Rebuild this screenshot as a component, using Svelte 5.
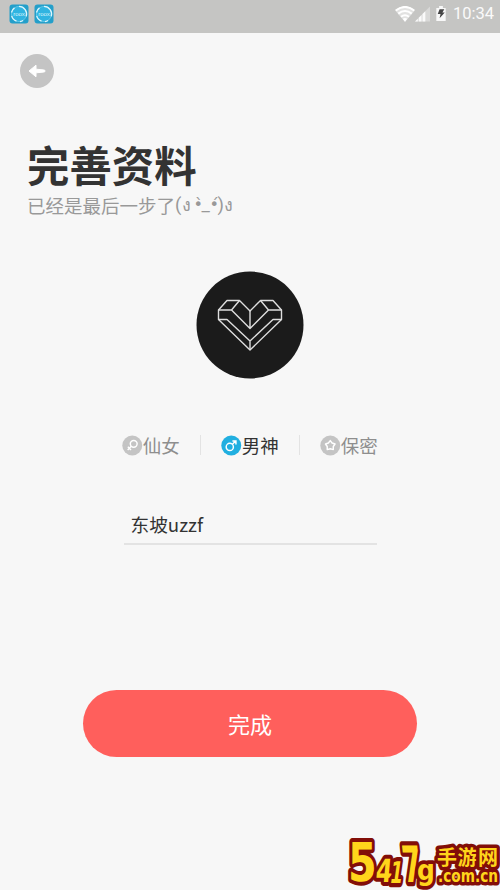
<script lang="ts">
	let gender = $state('male');
	let nickname = $state('东坡uzzf');

	const genders = [
		{ id: 'female', label: '仙女' },
		{ id: 'male', label: '男神' },
		{ id: 'secret', label: '保密' }
	];
</script>

<div class="screen">
	<header class="status">
		<div class="apps">
			{#each [0, 1] as app (app)}
				<svg class="app" viewBox="0 0 20 20">
					<rect x="0.5" y="0.5" width="19" height="19" rx="3" fill="#249fca" />
					<circle cx="10" cy="10" r="7.6" fill="#30b4e1" stroke="#6ccbea" stroke-width="0.8" />
					<path
						d="M10 2.4a7.6 7.6 0 0 1 7.2 10M14 16.5a7.6 7.6 0 0 1-3 1.1M7.5 17.2a7.6 7.6 0 0 1-4.8-5.3M2.5 8.5a7.6 7.6 0 0 1 3-4.6"
						fill="none"
						stroke="#dff6fc"
						stroke-width="1.3"
					/>
					<text x="10" y="12" text-anchor="middle">roox</text>
				</svg>
			{/each}
		</div>
		<div class="system">
			<svg class="wifi" viewBox="0 0 20 16">
				<path d="M0 4.2Q10-3.6 20 4.2L10 16Z" fill="#e2e2e1" />
				<path
					d="M.8 4.5Q10-2.6 19.2 4.5M3.3 7.6Q10 2.4 16.7 7.6M6 10.8Q10 7.8 14 10.8"
					fill="none"
					stroke="#fff"
					stroke-width="2"
				/>
				<path d="M7.7 12.8Q10 11.1 12.3 12.8L10 15.8Z" fill="#fff" />
			</svg>
			<svg class="signal" viewBox="0 0 16 16">
				<path d="M0 16L16 0V16Z" fill="#d9d9d8" />
				<path d="M0 16l3-3v3zM4 12l3-3v7H4zM8 8l3-3v11H8z" fill="#fafafa" />
			</svg>
			<svg class="battery" viewBox="0 0 12 16">
				<path d="M1 2h3V0h4v2h3v14H1z" fill="#f8f8f8" />
				<path d="M4.5 3.5h5L7.5 7H10l-5.5 6 1-4.5H2.5z" fill="#454545" />
			</svg>
			<span class="time">10:34</span>
		</div>
	</header>

	<button class="back" aria-label="返回">
		<svg viewBox="0 0 34 34">
			<path
				d="M9 17l7-5.8v4l7.7.7q1.4.1 1.4 1.1T23.7 18.1l-7.7.7v4z"
				fill="#fff"
				stroke="#fff"
				stroke-width="1"
				stroke-linejoin="round"
			/>
		</svg>
	</button>

	<h1>完善资料</h1>
	<p class="hint">
		<span>已经是最后一步了</span><span class="face"
			><span class="paren">(</span><span class="arm">ง</span><span class="eye left">•̀</span><span
				class="mouth">_</span
			><span class="eye">•́</span><span class="paren">)</span><span class="arm">ง</span></span
		>
	</p>

	<svg class="avatar" viewBox="0 0 108 108">
		<circle cx="54" cy="54" r="53.5" fill="#1b1b1b" />
		<g fill="none" stroke="#dedede" stroke-width="1.4" stroke-linejoin="round">
			<path d="M22.5 39L31 29.5h12.5L54 40l10.5-10.5H77L85.5 39v9.5L54 79 22.5 48.5z" />
			<path d="M22.5 39h13l8-9.5M35.5 39L54 57.5 72.5 39l-8-9.5M72.5 39h13M54 40v17.5" />
			<path d="M22.5 48.5h8.5L54 70l23-21.5h8.5M54 70v9" />
		</g>
	</svg>

	<div class="genders">
		{#each genders as item (item.id)}
			<button class="gender" class:active={gender === item.id} onclick={() => (gender = item.id)}>
				<svg viewBox="0 0 21 21">
					<circle class="disc" cx="10.5" cy="10.5" r="10.2" />
					<g fill="none" stroke="#fff" stroke-width="1.5">
						{#if item.id === 'female'}
							<circle cx="12" cy="8.8" r="3.5" />
							<path d="M9.5 11.3L5.8 15M6 11.8l3.2 3.2" />
						{:else if item.id === 'male'}
							<circle cx="9" cy="12" r="3.7" />
							<path d="M11.7 9.3L15 6M11.7 5.8h3.6v3.6" />
						{:else}
							<path
								d="M10.5 5.5l1.9 2.5 3 1-1.8 2.5v3.2l-3.1-.9-3.1.9v-3.2L5.6 9l3-1z"
								stroke-linejoin="round"
							/>
						{/if}
					</g>
				</svg>
				<span>{item.label}</span>
			</button>
		{/each}
	</div>

	<input class="nickname" type="text" aria-label="昵称" bind:value={nickname} />

	<button class="submit">完成</button>

	<svg class="watermark" viewBox="0 0 154 56">
		<g class="outlined">
			<text class="digit" transform="translate(2 47) scale(.78 1)" font-size="53">5</text>
			<text class="digit" transform="translate(29 48) skewX(-5) scale(.75 1)" font-size="32">4</text>
			<text class="digit" transform="translate(58 48) skewX(6) scale(.55 1)" font-size="50">7</text>
			<text class="digit" transform="translate(43 49) skewX(-8) scale(.6 1)" font-size="30">1</text>
			<text class="digit" transform="translate(71 46) scale(.86 1)" font-size="29">g</text>
			<text class="domain" x="92" y="48" textLength="60" lengthAdjust="spacingAndGlyphs">.com.cn</text>
			<text class="name" x="91" y="31" textLength="61">手游网</text>
		</g>
	</svg>
</div>

<style>
	:global(body) {
		margin: 0;
	}

	.screen {
		position: relative;
		box-sizing: border-box;
		display: flex;
		flex-direction: column;
		width: 500px;
		height: 890px;
		overflow: hidden;
		background: #f7f7f7;
		color: #333;
		font-family: 'Noto Sans CJK SC', sans-serif;
	}

	button {
		padding: 0;
		border: 0;
		font-family: inherit;
		cursor: pointer;
	}

	svg {
		display: block;
		flex-shrink: 0;
	}

	.status {
		box-sizing: border-box;
		display: flex;
		justify-content: space-between;
		height: 33px;
		padding: 0 6px 0 9px;
		background: #c5c5c3;
	}

	.apps {
		display: flex;
		gap: 5px;
		padding-top: 4px;
	}

	.app {
		width: 20px;
		height: 20px;
	}

	.app text {
		fill: #d9f4fc;
		font: 6px 'Liberation Sans', sans-serif;
	}

	.system {
		display: flex;
		align-items: center;
		height: 27px;
	}

	.wifi {
		width: 20px;
		height: 16px;
	}

	.signal {
		width: 15px;
		height: 16px;
	}

	.battery {
		width: 12px;
		height: 15px;
		margin: 0 6px 0 5px;
	}

	.time {
		color: #fafafa;
		font: 16.5px/27px Roboto, sans-serif;
	}

	.back {
		width: 34px;
		height: 34px;
		margin: 21px 0 0 20px;
		border-radius: 50%;
		background: #c4c4c4;
	}

	h1 {
		margin: 51px 0 0 27px;
		font-size: 42.4px;
		font-weight: 700;
		line-height: 50px;
	}

	.hint {
		display: flex;
		height: 26px;
		margin: 3px 0 0 27px;
		color: #999;
		font-size: 18.5px;
		line-height: 26px;
		white-space: nowrap;
	}

	.face {
		display: flex;
		font-family: Roboto, 'Noto Sans CJK SC', sans-serif;
	}

	.paren {
		width: 6.5px;
	}

	.arm {
		width: 9px;
		font-size: 18px;
	}

	.eye {
		width: 8px;
		font-family: 'DejaVu Sans', sans-serif;
		font-size: 16px;
	}

	.left {
		margin-left: 3px;
	}

	.mouth {
		width: 8px;
	}

	.avatar {
		align-self: center;
		width: 108px;
		height: 108px;
		margin-top: 52.5px;
	}

	.genders {
		display: flex;
		align-self: center;
		margin-top: 52.5px;
	}

	.gender {
		display: flex;
		align-items: center;
		height: 28px;
		background: none;
		color: #8e8e8e;
		font-size: 18.5px;
		line-height: 28px;
	}

	.gender svg {
		width: 20.5px;
		height: 21px;
	}

	.gender + .gender::before {
		content: '';
		width: 1px;
		height: 20px;
		margin: 0 20.5px 0 20px;
		background: #e3e3e3;
	}

	.disc {
		fill: #c4c4c4;
	}

	.gender.active {
		color: #333;
	}

	.active .disc {
		fill: #21afe0;
	}

	.nickname {
		box-sizing: border-box;
		align-self: center;
		width: 253px;
		height: 42px;
		margin-top: 44px;
		padding: 1px 7px 0;
		border: 0;
		border-bottom: 2px solid #e3e3e3;
		outline: none;
		background: none;
		color: #333;
		font-family: inherit;
		font-size: 18.7px;
	}

	.submit {
		align-self: center;
		width: 334px;
		height: 67px;
		margin-top: 144.5px;
		border-radius: 34px;
		background: #ff5f5c;
		color: #fff;
		font-size: 22px;
		line-height: 64px;
	}

	.watermark {
		position: absolute;
		right: 0;
		bottom: 0;
		width: 154px;
		height: 56px;
		overflow: visible;
	}

	.outlined {
		fill: #ffd51b;
		stroke: #820e08;
		stroke-width: 7px;
		stroke-linejoin: round;
		paint-order: stroke;
	}

	.outlined text {
		vector-effect: non-scaling-stroke;
	}

	.digit {
		font-family: 'DejaVu Sans', sans-serif;
		font-weight: 700;
	}

	.name {
		font-size: 20px;
		font-weight: 700;
	}

	.domain {
		font: 700 17px 'DejaVu Sans', sans-serif;
	}
</style>
